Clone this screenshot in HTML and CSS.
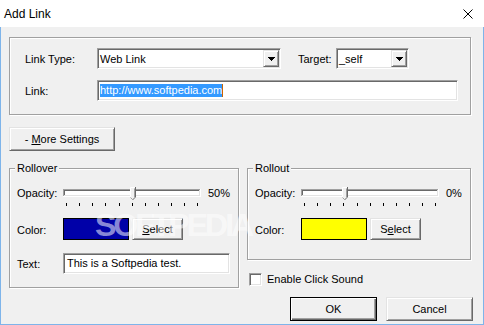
FILE: index.html
```html
<!DOCTYPE html>
<html>
<head>
<meta charset="utf-8">
<title>Add Link</title>
<link rel="stylesheet" href="styles.css">
</head>
<body>
<div class="window">
  <div class="titlebar">
    <span class="title">Add Link</span>
    <svg class="close" width="10" height="10" viewBox="0 0 10 10"><path d="M0.5 0.5L9.5 9.5M9.5 0.5L0.5 9.5" stroke="#000" stroke-width="1" fill="none"/></svg>
  </div>
  <div class="client">
    <div class="group top-group">
      <div class="row">
        <span class="lbl lbl-wide">Link Type:</span>
        <div class="sunken combo combo-type">
          <span class="combo-text">Web Link</span>
          <span class="drop"><svg width="7" height="4" viewBox="0 0 7 4" shape-rendering="crispEdges"><path d="M0 0h7v1h-1v1h-1v1h-1v1h-1v-1h-1v-1h-1v-1h-1z" fill="#000"/></svg></span>
        </div>
        <span class="lbl lbl-target">Target:</span>
        <div class="sunken combo combo-target">
          <span class="combo-text">_self</span>
          <span class="drop"><svg width="7" height="4" viewBox="0 0 7 4" shape-rendering="crispEdges"><path d="M0 0h7v1h-1v1h-1v1h-1v1h-1v-1h-1v-1h-1v-1h-1z" fill="#000"/></svg></span>
        </div>
      </div>
      <div class="row">
        <span class="lbl lbl-wide">Link:</span>
        <div class="sunken edit-link"><span class="sel">http://www.softpedia.com</span><span class="caret"></span></div>
      </div>
    </div>

    <button class="btn btn-more">- <u>M</u>ore Settings</button>

    <div class="bottom">
      <div class="group roll rollover">
        <span class="gtitle">Rollover</span>
        <div class="orow">
          <span class="lbl lbl-s olbl">Opacity:</span>
          <svg class="slider" width="138" height="25" viewBox="0 0 138 25">
            <g shape-rendering="crispEdges">
              <rect x="0" y="6" width="138" height="8" fill="#fff"/>
              <rect x="0" y="6" width="137" height="1" fill="#a0a0a0"/>
              <rect x="0" y="6" width="1" height="7" fill="#a0a0a0"/>
              <rect x="1" y="7" width="135" height="1" fill="#696969"/>
              <rect x="1" y="7" width="1" height="5" fill="#696969"/>
              <rect x="1" y="12" width="136" height="1" fill="#e3e3e3"/>
              <rect x="136" y="7" width="1" height="6" fill="#e3e3e3"/>
              <rect x="3" y="20" width="1" height="3"/><rect x="16" y="20" width="1" height="3"/><rect x="29" y="20" width="1" height="3"/><rect x="42" y="20" width="1" height="3"/><rect x="56" y="20" width="1" height="3"/><rect x="69" y="20" width="1" height="3"/><rect x="82" y="20" width="1" height="3"/><rect x="95" y="20" width="1" height="3"/><rect x="108" y="20" width="1" height="3"/><rect x="121" y="20" width="1" height="3"/><rect x="134" y="20" width="1" height="3"/>
            </g>
            <g transform="translate(67 4)">
              <path d="M0 0h6v10l-3 3l-3-3z" fill="#f0f0f0"/>
              <path d="M0.5 10V0.5H5" stroke="#fff" fill="none"/>
              <path d="M5.5 0v10l-3 3" stroke="#696969" fill="none"/>
              <path d="M4.5 1.5v8.5" stroke="#a0a0a0" fill="none"/>
              <path d="M0.5 10.5l2.2 2.2" stroke="#a0a0a0" fill="none"/>
            </g>
          </svg>
          <span class="lbl pct">50%</span>
        </div>
        <div class="crow">
          <span class="lbl lbl-s clbl">Color:</span>
          <div class="swatch swatch-blue"></div>
          <button class="btn btn-select"><u>S</u>elect</button>
        </div>
        <div class="trow">
          <span class="lbl lbl-s tlbl">Text:</span>
          <div class="sunken edit-text">This is a Softpedia test.</div>
        </div>
      </div>

      <div class="rightcol">
        <div class="group roll rollout">
          <span class="gtitle">Rollout</span>
          <div class="orow">
            <span class="lbl lbl-s olbl">Opacity:</span>
            <svg class="slider" width="138" height="25" viewBox="0 0 138 25">
              <g shape-rendering="crispEdges">
                <rect x="0" y="6" width="138" height="8" fill="#fff"/>
                <rect x="0" y="6" width="137" height="1" fill="#a0a0a0"/>
                <rect x="0" y="6" width="1" height="7" fill="#a0a0a0"/>
                <rect x="1" y="7" width="135" height="1" fill="#696969"/>
                <rect x="1" y="7" width="1" height="5" fill="#696969"/>
                <rect x="1" y="12" width="136" height="1" fill="#e3e3e3"/>
                <rect x="136" y="7" width="1" height="6" fill="#e3e3e3"/>
                <rect x="3" y="20" width="1" height="3"/><rect x="16" y="20" width="1" height="3"/><rect x="29" y="20" width="1" height="3"/><rect x="42" y="20" width="1" height="3"/><rect x="56" y="20" width="1" height="3"/><rect x="69" y="20" width="1" height="3"/><rect x="82" y="20" width="1" height="3"/><rect x="95" y="20" width="1" height="3"/><rect x="108" y="20" width="1" height="3"/><rect x="121" y="20" width="1" height="3"/><rect x="134" y="20" width="1" height="3"/>
              </g>
              <g transform="translate(41 4)">
                <path d="M0 0h6v10l-3 3l-3-3z" fill="#f0f0f0"/>
                <path d="M0.5 10V0.5H5" stroke="#fff" fill="none"/>
                <path d="M5.5 0v10l-3 3" stroke="#696969" fill="none"/>
                <path d="M4.5 1.5v8.5" stroke="#a0a0a0" fill="none"/>
                <path d="M0.5 10.5l2.2 2.2" stroke="#a0a0a0" fill="none"/>
              </g>
            </svg>
            <span class="lbl pct">0%</span>
          </div>
          <div class="crow">
            <span class="lbl lbl-s clbl">Color:</span>
            <div class="swatch swatch-yellow"></div>
            <button class="btn btn-select">S<u>e</u>lect</button>
          </div>
        </div>

        <div class="check">
          <span class="sunken box"></span>
          <span class="lbl">Enable Click Sound</span>
        </div>

        <div class="actions">
          <button class="btn btn-action btn-default">OK</button>
          <button class="btn btn-action">Cancel</button>
        </div>
      </div>
    </div>
  </div>
  <div class="watermark">SOFTPEDIA</div>
</div>
</body>
</html>
```

FILE: styles.css
```css
* { box-sizing: border-box; }
html, body { margin: 0; padding: 0; }
body {
  font-family: "Liberation Sans", Arial, sans-serif;
  font-size: 11px;
  color: #000;
  background: #fff;
}
.window {
  position: relative;
  width: 484px;
  height: 325px;
  display: flex;
  flex-direction: column;
  overflow: hidden;
}
.titlebar {
  height: 27px;
  flex: none;
  background: #fff;
  display: flex;
  align-items: center;
  justify-content: space-between;
  padding: 0 11px 0 4px;
}
.title { font-size: 12px; line-height: 14px; }
.close { display: block; }

.client {
  flex: 1;
  background: #f0f0f0;
  border: 1px solid #7eb4ea;
  border-top: 0;
  padding: 10px 10px 0 8px;
  display: flex;
  flex-direction: column;
  align-items: flex-start;
}

.group {
  border: 1px solid #a0a0a0;
  box-shadow: inset 1px 1px #fff, 1px 1px #fff;
}
.sunken {
  border: 1px solid;
  border-color: #a0a0a0 #fff #fff #a0a0a0;
  box-shadow: inset 1px 1px #696969, inset -1px -1px #e3e3e3;
  background: #fff;
}
.btn {
  background: #f0f0f0;
  border: 1px solid;
  border-color: #e3e3e3 #696969 #696969 #e3e3e3;
  box-shadow: inset 1px 1px #fff, inset -1px -1px #a0a0a0;
  font: inherit;
  color: #000;
  padding: 0;
  line-height: 13px;
  text-align: center;
}
.lbl { line-height: 13px; white-space: nowrap; }

.top-group {
  width: 462px;
  padding: 10px 0 13px 15px;
  display: flex;
  flex-direction: column;
  gap: 11px;
}
.row { display: flex; align-items: flex-start; height: 21px; }
.lbl-wide { width: 72px; margin-top: 5px; }
.lbl-target { width: 38px; margin: 5px 0 0 17px; }
.combo { height: 21px; display: flex; align-items: flex-start; }
.combo-type { width: 184px; }
.combo-target { width: 73px; }
.combo-text { flex: 1; line-height: 13px; padding: 4px 0 0 2px; white-space: nowrap; }
.drop {
  width: 16px;
  height: 17px;
  margin: 1px 1px 0 0;
  background: #f0f0f0;
  border: 1px solid;
  border-color: #e3e3e3 #696969 #696969 #e3e3e3;
  box-shadow: inset 1px 1px #fff, inset -1px -1px #a0a0a0;
  display: flex;
  align-items: center;
  justify-content: center;
}
.drop svg { display: block; }
.edit-link {
  width: 361px;
  height: 21px;
  padding: 3px 0 0 2px;
  display: flex;
  align-items: flex-start;
}
.sel {
  background: #3399ff;
  color: #fff;
  line-height: 13px;
  white-space: nowrap;
}
.caret { width: 1px; height: 13px; background: #cc6600; }

.btn-more { width: 106px; height: 24px; margin-top: 12px; }

.bottom {
  display: flex;
  align-items: flex-start;
  gap: 8px;
  margin-top: 17px;
}
.roll {
  display: flex;
  flex-direction: column;
  align-items: flex-start;
}
.rollover { width: 230px; padding: 0 0 13px 7px; }
.rollout { width: 224px; padding: 0 0 19px 7px; }
.gtitle {
  margin: -7px 0 0 -2px;
  padding: 0 2px;
  background: #f0f0f0;
  line-height: 13px;
}
.orow { display: flex; align-items: flex-start; margin-top: 8px; height: 25px; }
.lbl-s { width: 46px; }
.olbl { margin-top: 4px; }
.slider { display: block; }
.pct { margin: 4px 0 0 7px; }
.crow { display: flex; align-items: flex-start; margin-top: 10px; height: 22px; }
.clbl { margin-top: 6px; }
.swatch { width: 66px; height: 22px; border: 1px solid #000; }
.swatch-blue { background: #0000a8; }
.swatch-yellow { background: #ffff00; }
.btn-select { width: 51px; height: 22px; margin-left: 3px; }
.trow { display: flex; align-items: flex-start; margin-top: 13px; height: 21px; }
.tlbl { margin-top: 5px; }
.edit-text {
  width: 167px;
  height: 21px;
  padding: 0 2px 0 3px;
  line-height: 13px;
  display: flex;
  align-items: center;
  white-space: nowrap;
}

.rightcol {
  width: 226px;
  display: flex;
  flex-direction: column;
  align-items: flex-start;
}
.check {
  display: flex;
  align-items: center;
  gap: 5px;
  height: 13px;
  margin: 13px 0 0 2px;
}
.box { width: 13px; height: 13px; display: block; }
.actions {
  display: flex;
  gap: 9px;
  margin-top: 11px;
  align-self: flex-end;
}
.btn-action { width: 87px; height: 24px; }
.btn-default {
  border: 1px solid #000;
  box-shadow: inset 1px 1px #fff, inset -1px -1px #696969, inset -2px -2px #a0a0a0;
}

.watermark {
  position: absolute;
  left: 95px;
  top: 209px;
  font: bold 32px/32px "Liberation Sans", Arial, sans-serif;
  letter-spacing: -3px;
  color: rgba(255, 255, 255, 0.55);
  pointer-events: none;
  white-space: nowrap;
}
```
